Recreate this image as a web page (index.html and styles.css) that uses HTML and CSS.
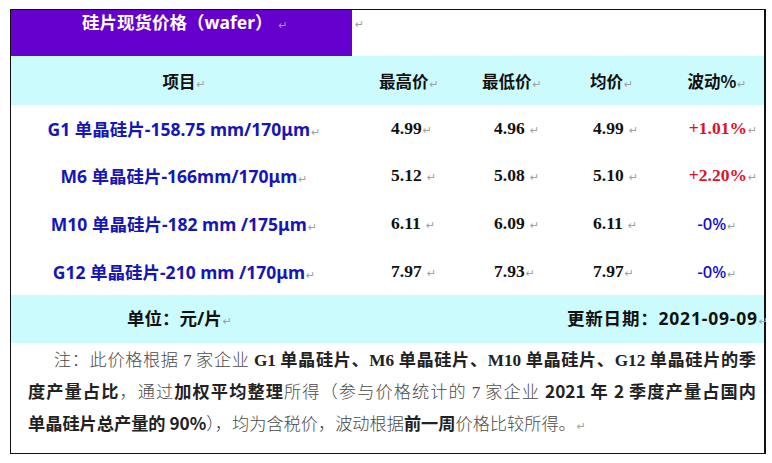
FILE: index.html
```html
<!DOCTYPE html>
<html lang="zh">
<head>
<meta charset="utf-8">
<title>硅片现货价格</title>
<link rel="stylesheet" href="styles.css">
</head>
<body>
<div class="sheet">
  <div class="title-row">
    <div class="title">硅片现货价格（wafer）<span class="rm">↵</span></div>
    <div class="title-rest"><span class="rm">↵</span></div>
  </div>
  <div class="grid head">
    <div class="c1">项目<span class="rm">↵</span></div>
    <div class="c2h">最高价<span class="rm">↵</span></div>
    <div class="c3h">最低价<span class="rm">↵</span></div>
    <div class="c4h">均价<span class="rm">↵</span></div>
    <div class="c5">波动%<span class="rm">↵</span></div>
  </div>
  <div class="grid row r47">
    <div class="c1 name">G1 单晶硅片-158.75 mm/170μm<span class="rm">↵</span></div>
    <div class="c2 num">4.99<span class="rm">↵</span></div>
    <div class="c3 num">4.96 <span class="rm">↵</span></div>
    <div class="c4 num">4.99 <span class="rm">↵</span></div>
    <div class="c5 up">+1.01%<span class="rm">↵</span></div>
  </div>
  <div class="grid row r47">
    <div class="c1 name">M6 单晶硅片-166mm/170μm<span class="rm">↵</span></div>
    <div class="c2 num">5.12 <span class="rm">↵</span></div>
    <div class="c3 num">5.08 <span class="rm">↵</span></div>
    <div class="c4 num">5.10 <span class="rm">↵</span></div>
    <div class="c5 up">+2.20%<span class="rm">↵</span></div>
  </div>
  <div class="grid row r48">
    <div class="c1 name">M10 单晶硅片-182 mm /175μm<span class="rm">↵</span></div>
    <div class="c2 num">6.11 <span class="rm">↵</span></div>
    <div class="c3 num">6.09 <span class="rm">↵</span></div>
    <div class="c4 num">6.11 <span class="rm">↵</span></div>
    <div class="c5 flat">-0%<span class="rm">↵</span></div>
  </div>
  <div class="grid row r48">
    <div class="c1 name">G12 单晶硅片-210 mm /170μm<span class="rm">↵</span></div>
    <div class="c2 num">7.97 <span class="rm">↵</span></div>
    <div class="c3 num">7.93<span class="rm">↵</span></div>
    <div class="c4 num">7.97<span class="rm">↵</span></div>
    <div class="c5 flat">-0%<span class="rm">↵</span></div>
  </div>
  <div class="unit-row">
    <div class="unit">单位：元/片<span class="rm">↵</span></div>
    <div class="date">更新日期：2021-09-09<span class="rm edge">↵</span></div>
  </div>
  <div class="note">
    <p class="ln ln1">注：此价格根据 <span class="lat">7</span> 家企业 <b class="lat">G1</b> <b>单晶硅片、<span class="lat">M6</span> 单晶硅片、<span class="lat">M10</span> 单晶硅片、<span class="lat">G12</span> 单晶硅片的季</b></p>
    <p class="ln"><b>度产量占比</b>，通过<b>加权平均整理</b>所得（参与价格统计的 <span class="lat">7</span> 家企业 <b>2021 年 2 季度产量占国内</b></p>
    <p class="ln last"><b>单晶硅片总产量的 90%</b>），均为含税价，波动根据<b>前一周</b>价格比较所得。<span class="rm">↵</span></p>
  </div>
</div>
</body>
</html>
```
FILE: styles.css
```css
html, body {
  margin: 0;
  padding: 0;
  background: #ffffff;
}
body {
  font-family: "Noto Sans", "Noto Sans CJK SC", sans-serif;
  color: #111;
}
.sheet {
  margin: 9px 0 0 10px;
  width: 753px;
  border-top: 1px solid #111;
  border-left: 1px solid #111;
  border-bottom: 1px solid #111;
  border-right: 2px solid #111;
}
.rm {
  color: #a0a0a0;
  font-family: "DejaVu Sans", sans-serif;
  font-weight: normal;
  font-size: 11px;
  margin-left: 1px;
  letter-spacing: 0;
}
.title-row {
  display: flex;
  height: 46px;
}
.title {
  width: 270px;
  background: #6600cc;
  color: #ffffff;
  font-weight: bold;
  font-size: 17.5px;
  line-height: 22px;
  padding: 1px 0 0 71px;
  white-space: nowrap;
}
.title .rm { color: #a98ae0; margin-left: 6px; }
.title-rest {
  flex: 1;
  line-height: 22px;
  padding: 1px 0 0 2px;
}
.grid {
  display: grid;
  grid-template-columns: 344px 117px 103px 95px 94px;
  align-items: center;
}
.head {
  height: 49px;
  background: #ccfbfd;
  font-weight: bold;
  font-size: 16.5px;
  font-family: "Noto Sans CJK SC", sans-serif;
}
.r47 { height: 47px; }
.r48 { height: 48px; }
.c1 { text-align: center; padding-left: 2px; white-space: nowrap; }
.c5 { text-align: center; }
.c2h { padding-left: 24px; }
.c3h { padding-left: 10px; }
.c4h { padding-left: 15px; }
.c2 { padding-left: 36px; }
.c3 { padding-left: 22px; }
.c4 { padding-left: 18px; }
.name {
  color: #1515b8;
  font-weight: bold;
  font-size: 17.5px;
  font-family: "Noto Sans", "Noto Sans CJK SC", sans-serif;
}
.num {
  font-family: "Liberation Serif", serif;
  font-weight: bold;
  font-size: 17.5px;
  color: #111;
}
.up {
  font-family: "Liberation Serif", serif;
  font-weight: bold;
  font-size: 17.5px;
  color: #e0102a;
  padding-left: 12px;
}
.flat {
  font-family: "Noto Sans", sans-serif;
  font-size: 16.5px;
  font-weight: 500;
  color: #0a0acc;
}
.unit-row {
  height: 48px;
  background: #ccfbfd;
  display: flex;
  align-items: center;
  justify-content: space-between;
  font-weight: bold;
  font-size: 17.5px;
  font-family: "Noto Sans", "Noto Sans CJK SC", sans-serif;
  white-space: nowrap;
  padding-bottom: 4px;
  box-sizing: border-box;
}
.unit { padding-left: 116px; }
.date { padding-right: 9px; letter-spacing: 0.8px; }
.edge { margin-right: -13px; }
.note {
  height: 110px;
  padding: 0 8px 0 17px;
  box-sizing: border-box;
}
.ln {
  margin: 0;
  font-size: 17.2px;
  line-height: 32px;
  height: 32px;
  white-space: nowrap;
  text-align: justify;
  text-align-last: justify;
  color: #4a4a4a;
  font-family: "Noto Sans CJK SC", sans-serif;
  font-weight: 300;
}
.ln1 { padding-left: 26px; white-space: normal; }
.ln.last { text-align-last: left; }
.ln b {
  color: #222;
  font-weight: bold;
}
.ln .lat {
  font-family: "Liberation Serif", serif;
}
```
